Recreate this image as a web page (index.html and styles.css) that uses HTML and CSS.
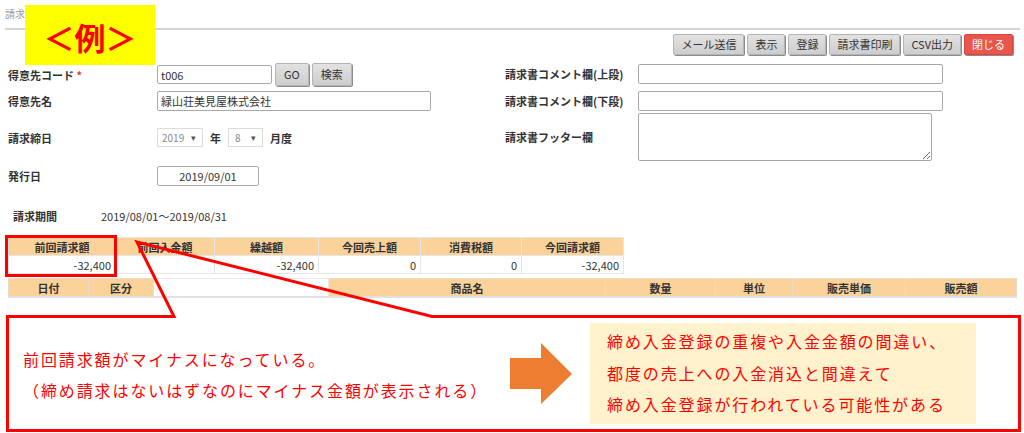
FILE: index.html
```html
<!DOCTYPE html>
<html>
<head>
	<title>請求書発行</title>
	<meta charset="utf-8">
	<link rel="stylesheet" href="styles.css">
</head>
<body>

	<div class="page">

		<div class="pageTitle">請求</div>

		<div class="toolbar">
			<button class="btn">メール送信</button>
			<button class="btn">表示</button>
			<button class="btn">登録</button>
			<button class="btn">請求書印刷</button>
			<button class="btn">CSV出力</button>
			<button class="btn --close">閉じる</button>
		</div>

		<div class="form">

			<div class="formLeft">
				<div class="row --r1">
					<span class="lbl">得意先コード <span class="req">*</span></span>
					<input class="txt --code" value="t006">
					<button class="btn --go">GO</button>
					<button class="btn --go">検索</button>
				</div>
				<div class="row --r2">
					<span class="lbl">得意先名</span>
					<input class="txt --name" value="緑山荘美見屋株式会社">
				</div>
				<div class="row --r3">
					<span class="lbl">請求締日</span>
					<span class="sel --year">2019<i>▾</i></span>
					<span class="unit">年</span>
					<span class="sel --month">8<i>▾</i></span>
					<span class="unit">月度</span>
				</div>
				<div class="row --r4">
					<span class="lbl">発行日</span>
					<input class="txt --date" value="2019/09/01">
				</div>
			</div>

			<div class="formRight">
				<div class="row --q1">
					<span class="lbl2">請求書コメント欄(上段)</span>
					<input class="txt --comment">
				</div>
				<div class="row --q2">
					<span class="lbl2">請求書コメント欄(下段)</span>
					<input class="txt --comment">
				</div>
				<div class="row --q3">
					<span class="lbl2">請求書フッター欄</span>
					<textarea class="txt --footer"></textarea>
				</div>
			</div>

		</div>

		<div class="period">
			<span class="periodLbl">請求期間</span>
			<span>2019/08/01～2019/08/31</span>
		</div>

		<table class="summary">
			<colgroup>
				<col style="width:107px">
				<col style="width:99px">
				<col style="width:104px">
				<col style="width:102px">
				<col style="width:101px">
				<col style="width:102px">
			</colgroup>
			<tr>
				<th>前回請求額</th>
				<th>前回入金額</th>
				<th>繰越額</th>
				<th>今回売上額</th>
				<th>消費税額</th>
				<th>今回請求額</th>
			</tr>
			<tr>
				<td>-32,400</td>
				<td></td>
				<td>-32,400</td>
				<td>0</td>
				<td>0</td>
				<td>-32,400</td>
			</tr>
		</table>

		<table class="detail">
			<colgroup>
				<col style="width:80px">
				<col style="width:65px">
				<col style="width:175px">
				<col style="width:277px">
				<col style="width:110px">
				<col style="width:77px">
				<col style="width:113px">
				<col style="width:111px">
			</colgroup>
			<tr>
				<th>日付</th>
				<th>区分</th>
				<th class="blank"></th>
				<th>商品名</th>
				<th>数量</th>
				<th>単位</th>
				<th>販売単価</th>
				<th>販売額</th>
			</tr>
		</table>

		<div class="callout">
			<div class="noteLeft">
				<p>前回請求額がマイナスになっている。</p>
				<p>（締め請求はないはずなのにマイナス金額が表示される）</p>
			</div>
			<svg class="arrow" width="62" height="62" viewBox="0 0 62 62">
				<polygon points="0,15 31,15 31,0 62,31 31,61 31,46 0,46" fill="#ed7d31"/>
			</svg>
			<div class="noteRight">
				<p>締め入金登録の重複や入金金額の間違い、</p>
				<p>都度の売上への入金消込と間違えて</p>
				<p>締め入金登録が行われている可能性がある</p>
			</div>
		</div>

		<!-- annotations drawn over the screen -->
		<div class="exampleTag">＜例＞</div>
		<div class="highlight"></div>
		<svg class="calloutLine" width="1024" height="433" viewBox="0 0 1024 433">
			<polygon points="7.5,316.5 174,316.5 137,242 432,316.5 1019.5,316.5 1019.5,430.5 7.5,430.5"
				fill="none" stroke="#ff0000" stroke-width="3" stroke-linejoin="miter"/>
		</svg>

	</div>

</body>
</html>
```

FILE: styles.css
```css
body {
	margin: 0;
	font-family: "Noto Sans CJK JP", "Noto Sans", sans-serif;
	font-size: 11px;
	color: #333;
	background: #fff;
}

.page {
	position: relative;
	width: 1024px;
	height: 433px;
	overflow: hidden;
}

.pageTitle {
	margin: 0 4px 0 5px;
	padding-top: 7px;
	height: 21px;
	line-height: 14px;
	font-size: 10px;
	color: #999;
	border-bottom: 2px solid #d4d4d4;
}

/* top buttons */

.toolbar {
	margin-top: 4px;
	height: 21px;
	padding-right: 11px;
	display: flex;
	justify-content: flex-end;
	gap: 3px;
}

.btn {
	font-family: inherit;
	font-size: 11px;
	color: #333;
	height: 21px;
	padding: 0 7px;
	border: 1px solid #b4b4b4;
	border-radius: 2px;
	background: linear-gradient(#e2e2e2, #cdcdcd);
	box-shadow: 1px 1px 0 #8c8c8c;
	line-height: 17px;
}

.--close {
	background: #e9564c;
	border-color: #d9463c;
	color: #fff;
}

.--go {
	height: 23px;
	margin-left: 3px;
	padding: 0 8px;
}

/* form */

.form {
	margin-top: 8px;
	padding-left: 8px;
	display: flex;
	height: 123px;
}

.formLeft {
	width: 497px;
}

.formRight {
	flex: 1;
}

.row {
	display: flex;
	align-items: center;
}

.--r1 { height: 23px; }
.--r2 { height: 21px; margin-top: 4px; }
.--r3 { height: 19px; margin-top: 17px; }
.--r4 { height: 20px; margin-top: 19px; }

.--q1 { height: 21px; }
.--q2 { height: 21px; margin-top: 6px; }
.--q3 { height: 48px; margin-top: 2px; }

.lbl {
	width: 149px;
	font-weight: bold;
}

.lbl2 {
	width: 133px;
	font-weight: bold;
}

.req {
	color: #e33;
}

.txt {
	font-family: inherit;
	font-size: 11px;
	color: #333;
	box-sizing: border-box;
	height: 20px;
	padding: 0 3px;
	border: 1px solid #a9a9a9;
	border-radius: 2px;
	background: #fff;
}

.--code { width: 115px; height: 19px; }
.--name { width: 274px; }
.--date { width: 102px; text-align: center; }
.--comment { width: 305px; }
.--footer { width: 294px; height: 48px; resize: both; }

.sel {
	box-sizing: border-box;
	height: 19px;
	line-height: 17px;
	border: 1px solid #dcdcdc;
	color: #888;
	font-size: 10px;
	padding-left: 4px;
	display: flex;
	justify-content: space-between;
}

.sel i {
	font-style: normal;
	color: #555;
	padding-right: 6px;
	font-size: 9px;
}

.--year { width: 46px; }
.--month { width: 35px; padding-left: 6px; }

.unit {
	font-weight: bold;
	margin: 0 7px;
}

/* period + tables */

.period {
	margin-top: 23px;
	padding-left: 13px;
	line-height: 14px;
	display: flex;
}

.periodLbl {
	width: 88px;
	font-weight: bold;
}

.summary,
.detail {
	border-collapse: collapse;
	margin-left: 8px;
	table-layout: fixed;
}

.summary {
	width: 615px;
	margin-top: 14px;
}

.summary th,
.summary td {
	border: 1px solid #e6e6e6;
	height: 17px;
	padding: 0 4px;
	line-height: 16px;
	overflow: hidden;
	white-space: nowrap;
}

.summary th,
.detail th {
	background: #fcd29b;
	font-weight: bold;
	text-align: center;
}

.summary td {
	text-align: right;
}

.detail {
	width: 1008px;
	margin-top: 4px;
	border-bottom: 2px solid #e2e2e2;
}

.detail th {
	border: 1px solid #eadcc8;
	height: 17px;
	line-height: 16px;
	padding: 0;
}

.detail th.blank {
	background: #fff;
	border-color: #eaeaea;
}

/* callout */

.callout {
	margin-top: 17px;
	margin-left: 6px;
	width: 1015px;
	height: 117px;
	box-sizing: border-box;
	padding: 3px;
	display: flex;
	align-items: center;
	font-size: 16px;
	color: #ff0000;
	letter-spacing: 1.9px;
}

.callout p {
	margin: 0;
}

.noteLeft {
	width: 487px;
	margin-left: 14px;
	line-height: 31px;
	padding-top: 3px;
	white-space: nowrap;
}

.arrow {
	flex: none;
}

.noteRight {
	margin-left: 18px;
	width: 386px;
	height: 101px;
	box-sizing: border-box;
	padding: 3px 0 0 17px;
	background: #fff2cc;
	line-height: 31.5px;
	white-space: nowrap;
}

.exampleTag {
	position: absolute;
	left: 25px;
	top: 5px;
	width: 130px;
	height: 60px;
	background: #ffff00;
	color: #ff0000;
	font-size: 31px;
	font-weight: bold;
	line-height: 64px;
	text-align: center;
}

.highlight {
	position: absolute;
	left: 5px;
	top: 235px;
	width: 112px;
	height: 42px;
	box-sizing: border-box;
	border: 3px solid #ff0000;
}

.calloutLine {
	position: absolute;
	left: 0;
	top: 0;
	pointer-events: none;
}
```
